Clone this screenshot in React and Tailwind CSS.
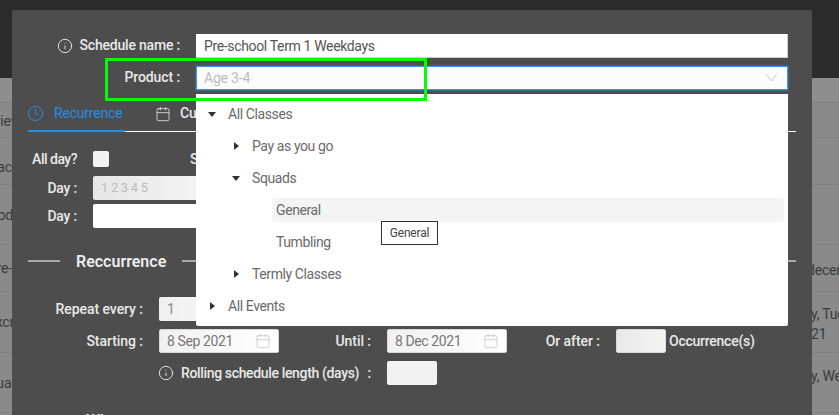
import React from "react";
import { Info, Clock, Calendar } from "lucide-react";

const Row = ({ h, left, leftW, right, rightClass }) => (
  <div className={`${h} flex items-center justify-between border-b border-[#7f7f7f] text-[14px] text-[#3a3a3a]`}>
    <div className={`${leftW} pt-[1px] flex justify-end overflow-hidden whitespace-nowrap shrink-0`}>{left}</div>
    <div className={`shrink-0 whitespace-nowrap leading-[20px] ${rightClass}`}>{right}</div>
  </div>
);

const Caret = ({ open }) =>
  open ? (
    <svg width="8" height="5" viewBox="0 0 8 5" className="shrink-0"><path d="M0 0h8L4 5z" fill="#333" /></svg>
  ) : (
    <svg width="5" height="8" viewBox="0 0 5 8" className="shrink-0 mx-[1.5px]"><path d="M0 0v8l5-4z" fill="#333" /></svg>
  );

const TreeRow = ({ indent, open, leaf, active, children }) => (
  <div className={`h-[32px] flex items-center text-[14px] text-[#6a6a6a] tracking-[-0.4px] ${indent}`}>
    {leaf ? (
      <div className={`h-[24px] flex items-center px-1 flex-1 rounded-[2px] ${active ? "bg-[#f4f4f4]" : ""}`}>{children}</div>
    ) : (
      <>
        <div className="w-[32px] pl-[12px] flex items-center"><Caret open={open} /></div>
        <span>{children}</span>
      </>
    )}
  </div>
);

const DateInput = ({ value }) => (
  <div className="w-[120px] h-[24px] shrink-0 rounded-[2px] border border-[#d9d9d9] bg-linear-to-r from-[#f0f0f0] to-white flex items-center justify-between pl-[7px] pr-[7px] text-[14px] tracking-[-0.4px] text-[#777]">
    <span>{value}</span>
    <Calendar size={16} strokeWidth={1} className="text-[#bbb]" />
  </div>
);

export default function App() {
  return (
    <div className="relative h-[415px] w-[839px] overflow-hidden bg-[#8a8a8a] font-[Roboto,sans-serif] tracking-[-0.2px]">
      <div className="h-[78px] bg-[#2b2b2b]" />
      <div className="h-[25px] border-b border-[#7f7f7f] bg-[#8e8e8e]" />
      <Row h="h-[35px]" leftW="w-[21px] pt-[3px]" left="Review" right="" rightClass="w-[28px]" />
      <Row h="h-[47px]" leftW="w-[19px] pt-[12px]" left="Face" right="" rightClass="w-[28px]" />
      <Row h="h-[60px]" leftW="w-[13px]" left="Prod" right="" rightClass="w-[28px]" />
      <Row h="h-[47px]" leftW="w-[19px]" left="Pre-s" right="december" rightClass="w-[32px] pt-[3px]" />
      <Row h="h-[61px]" leftW="w-[14px]" left="Excr" right={<>y, Tuesday<br />21</>} rightClass="w-[28px] pt-[3px]" />
      <Row h="h-[60px]" leftW="w-[19px]" left="Squad" right="y, Wednesday" rightClass="w-[28px] pb-[14px]" />

      <div className="absolute left-[12px] top-[10px] w-[800px] h-[405px] rounded-t-[2px] bg-[#4d4d4d] pt-[24px] text-[#e9e9e9]">
        <div className="flex items-center h-[24px]">
          <div className="w-[168px] pb-[1px] flex items-center justify-end gap-[7px] text-[14px] font-medium">
            <Info size={16} strokeWidth={1.4} />
            <span>Schedule name :</span>
          </div>
          <div className="ml-[16px] w-[592px] h-[24px] bg-white border-b border-r border-[#cfcfcf] pl-[8px] pt-[2px] flex items-center text-[14px] tracking-[-0.35px] text-[#555]">
            Pre-school Term 1 Weekdays
          </div>
        </div>
        <div className="flex items-center h-[24px] mt-[8px]">
          <div className="w-[168px] pb-[1px] text-right text-[14px] font-medium tracking-[-0.1px]">Product :</div>
          <div className="ml-[16px] w-[592px] h-[24px] bg-[#fbfbfb] border border-[#2f96f0] shadow-[0_0_2px_#2f96f0] pl-[7px] pr-[10px] flex items-center justify-between text-[14px] text-[#bdbdbd]">
            <span>Age 3-4</span>
            <svg width="11" height="8" viewBox="0 0 11 8" fill="none"><path d="M.5.5l5 6.5 5-6.5" stroke="#c4c4c4" /></svg>
          </div>
        </div>

        <div className="mx-[16px] mt-[6px] h-[36px] border-b border-white flex items-stretch text-[14px]">
          <div className="w-[97px] h-[36px] border-b-2 border-[#2090ea] flex items-center gap-[10px] text-[#2090ea]">
            <Clock size={17} strokeWidth={1.4} className="-ml-[1px]" />
            <span>Recurrence</span>
          </div>
          <div className="ml-[30px] flex items-center gap-[9px] font-medium">
            <Calendar size={16} strokeWidth={1.2} />
            <span>Custom</span>
          </div>
        </div>

        <div className="mx-[16px] mt-[19px] h-[16px] flex items-center text-[14px] font-medium">
          <div className="w-[49px] text-right tracking-[-0.5px] whitespace-nowrap">All day?</div>
          <div className="ml-[16px] w-[16px] h-[16px] rounded-[2px] bg-[#f3f3f3]" />
          <span className="ml-[81px]">Start</span>
        </div>
        <div className="mx-[16px] mt-[9px] h-[24px] flex items-center text-[14px] font-medium">
          <div className="w-[49px] text-right">Day :</div>
          <div className="ml-[16px] w-[200px] h-[24px] rounded-[2px] bg-linear-to-r from-[#e6e6e6] to-white pl-[8px] flex items-center text-[13px] text-[#bbb] font-normal tracking-[-0.3px]">1 2 3 4 5</div>
        </div>
        <div className="mx-[16px] mt-[4px] h-[24px] flex items-center text-[14px] font-medium">
          <div className="w-[49px] text-right">Day :</div>
          <div className="ml-[16px] w-[200px] h-[24px] rounded-[2px] bg-white" />
        </div>

        <div className="mx-[16px] mt-[21px] h-[24px] flex items-center">
          <div className="w-[32px] h-[2px] bg-[#a9a9a9]" />
          <span className="mx-[16px] pt-[2px] text-[16px] font-semibold text-[#ececec] tracking-normal">Reccurrence</span>
          <div className="flex-1 h-[2px] bg-[#a9a9a9]" />
        </div>

        <div className="mx-[16px] mt-[24px] h-[24px] flex items-center text-[14px] font-medium tracking-[-0.05px]">
          <div className="w-[115px] text-right">Repeat every :</div>
          <div className="ml-[16px] w-[120px] h-[24px] rounded-[2px] bg-linear-to-r from-[#efefef] to-white pl-[8px] flex items-center text-[#888] font-normal">1</div>
        </div>
        <div className="mx-[16px] mt-[8px] h-[24px] flex items-center text-[14px] font-medium tracking-[-0.05px]">
          <div className="w-[115px] text-right">Starting :</div>
          <div className="ml-[16px] font-normal"><DateInput value="8 Sep 2021" /></div>
          <div className="w-[92px] text-right">Until :</div>
          <div className="ml-[16px] font-normal"><DateInput value="8 Dec 2021" /></div>
          <div className="w-[93px] text-right">Or after :</div>
          <div className="ml-[16px] w-[50px] h-[24px] rounded-[2px] border border-[#d9d9d9] bg-linear-to-r from-[#e8e8e8] to-[#f4f4f4]" />
          <span className="ml-[3px] tracking-[-0.25px]">Occurrence(s)</span>
        </div>
        <div className="mx-[16px] mt-[8px] h-[24px] flex items-center text-[14px] font-medium">
          <div className="ml-[130px] w-[213px] flex items-center">
            <Info size={16} strokeWidth={1.4} className="shrink-0" />
            <span className="ml-[7px] flex-1 whitespace-nowrap tracking-[-0.35px]">Rolling schedule length (days)</span>
            <span>:</span>
          </div>
          <div className="ml-[16px] w-[50px] h-[24px] rounded-[2px] bg-[#f2f2f2]" />
        </div>
        <div className="ml-[74px] mt-[24px] text-[16px] font-semibold text-[#ececec] tracking-normal">When</div>

        <div className="absolute left-[184px] top-[84px] w-[592px] h-[232px] bg-white rounded-b-[2px] pt-[4px] pr-[4px]">
          <TreeRow open>All Classes</TreeRow>
          <TreeRow indent="pl-[24px]">Pay as you go</TreeRow>
          <TreeRow indent="pl-[24px]" open>Squads</TreeRow>
          <TreeRow indent="pl-[76px]" leaf active>General</TreeRow>
          <TreeRow indent="pl-[76px]" leaf>Tumbling</TreeRow>
          <TreeRow indent="pl-[24px]">Termly Classes</TreeRow>
          <TreeRow>All Events</TreeRow>
        </div>
        <div className="absolute left-[369px] top-[211px] w-[57px] h-[24px] bg-white border border-[#333] flex items-center justify-center text-[12px] text-[#444]">General</div>
      </div>

      <div className="absolute left-[105px] top-[58px] w-[322px] h-[43px] border-[3px] border-[#00ff00]" />
    </div>
  );
}
